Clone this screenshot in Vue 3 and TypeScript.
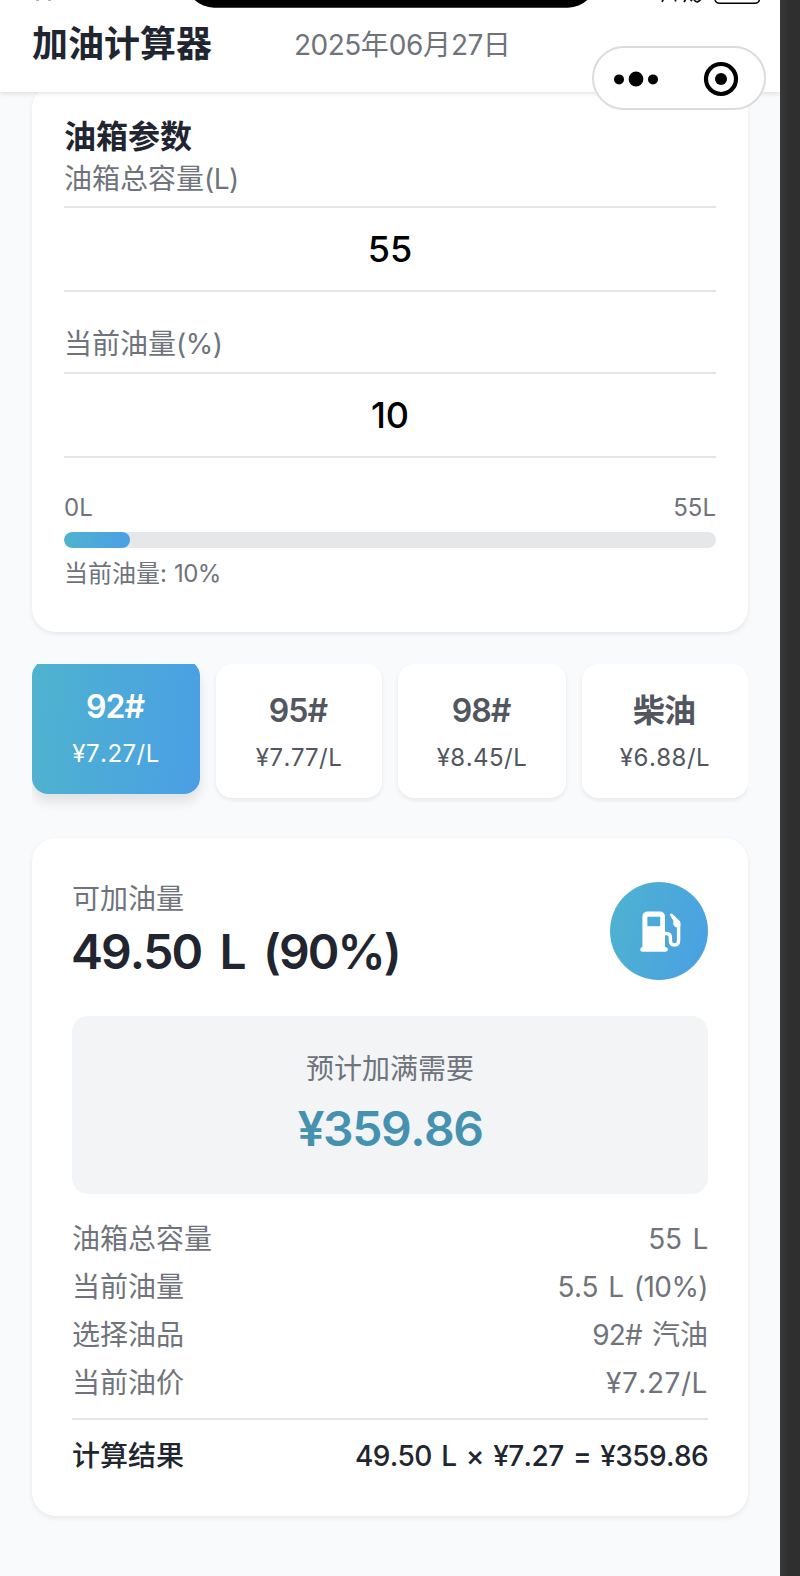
<script setup lang="ts">
interface Grade {
  name: string
  price: string
  active?: boolean
}

const grades: Grade[] = [
  { name: '92#', price: '¥7.27/L', active: true },
  { name: '95#', price: '¥7.77/L' },
  { name: '98#', price: '¥8.45/L' },
  { name: '柴油', price: '¥6.88/L' },
]

const capacity = 55
const percent = 10

interface Row {
  label: string
  value: string
  suffix?: string
  spacing?: 'tight' | 'snug' | 'wide'
}

const rows: Row[] = [
  { label: '油箱总容量', value: '55 L' },
  { label: '当前油量', value: '5.5 L (10%)', spacing: 'snug' },
  { label: '选择油品', value: '92# ', suffix: '汽油', spacing: 'tight' },
  { label: '当前油价', value: '¥7.27/L', spacing: 'wide' },
]
</script>

<template>
  <div class="window">
    <div class="screen">
      <header class="header">
        <h1 class="title">加油计算器</h1>
        <div class="date">
          <span class="num">2025</span>年<span class="num">06</span>月<span class="num">27</span>日
        </div>
      </header>

      <svg class="status" width="780" height="10" viewBox="0 0 780 10" aria-hidden="true">
        <path d="M186 -20 A28 28 0 0 0 214 7.7 H568 A28 28 0 0 0 596 -20 Z" fill="#000" />
        <rect x="715" y="-16" width="44.5" height="19.2" rx="4" fill="none" stroke="#000" stroke-width="1.5" />
        <path d="M662 1.8 L663.5 -1 M675.5 -2 V1.6 M684 2 L686.5 -2 M690 -1 L692 1 M694 0 Q697.5 4 701 -1" fill="none" stroke="#111" stroke-width="1.8" />
        <path d="M36 0.4 H39 M48 0.4 H51" stroke="#aaa" stroke-width="1" />
      </svg>

      <div class="capsule">
        <svg width="173" height="64" viewBox="0 0 173 64" aria-hidden="true">
          <circle cx="27" cy="33.4" r="5" />
          <circle cx="44" cy="33" r="7.4" />
          <circle cx="61" cy="33.4" r="5" />
          <circle cx="129" cy="33" r="15" fill="none" stroke="#000" stroke-width="4.2" />
          <circle cx="129" cy="33" r="6" />
        </svg>
      </div>

      <main class="content">
        <section class="card tank">
          <h2 class="heading">油箱参数</h2>
          <div class="label">油箱总容量<span class="num">(L)</span></div>
          <div class="field">{{ capacity }}</div>
          <div class="label second">当前油量<span class="num">(%)</span></div>
          <div class="field">{{ percent }}</div>
          <div class="scale">
            <span>0L</span>
            <span>{{ capacity }}L</span>
          </div>
          <div class="track"><div class="fill" :style="{ width: percent + '%' }"></div></div>
          <div class="level">当前油量<span class="num">: {{ percent }}%</span></div>
        </section>

        <section class="grades">
          <div v-for="g in grades" :key="g.name" class="grade" :class="{ active: g.active }">
            <div class="grade-name">{{ g.name }}</div>
            <div class="grade-price">{{ g.price }}</div>
          </div>
        </section>

        <section class="card result">
          <div class="summary">
            <div>
              <div class="small">可加油量</div>
              <div class="amount">49.50 L (90%)</div>
            </div>
            <div class="badge">
              <svg width="42" height="42" viewBox="0 0 42 42" aria-hidden="true">
                <path fill="#fff" fill-rule="evenodd" d="M8 0.5 H19.5 Q25 0.5 25 6 V36 Q27.8 36 27.8 38.5 Q27.8 40.7 25 40.7 H3 Q0.3 40.7 0.3 38.5 Q0.3 36 2.4 36 V6 Q2.4 0.5 8 0.5 Z M7.4 5.8 V15.3 H20.2 V5.8 Z" />
                <path d="M24.5 22.5 H26.4 Q30.4 22.5 30.4 27 V29.5 Q30.4 34 34.4 34 Q38.6 34 38.6 29.5 V12" fill="none" stroke="#fff" stroke-width="3.4" />
                <path d="M31.3 3.8 L39 11.3 V15 H36.2 L34.6 13.4 V9.2 Z" fill="#fff" stroke="#fff" stroke-width="2.6" stroke-linejoin="round" />
              </svg>
            </div>
          </div>

          <div class="cost">
            <div class="small">预计加满需要</div>
            <div class="price">¥359.86</div>
          </div>

          <div v-for="r in rows" :key="r.label" class="row">
            <span>{{ r.label }}</span>
            <span><span class="value" :class="r.spacing">{{ r.value }}</span>{{ r.suffix }}</span>
          </div>
          <div class="total">
            <span>计算结果</span>
            <span class="total-num">49.50 L × ¥7.27 = ¥359.86</span>
          </div>
        </section>
      </main>
    </div>
  </div>
</template>

<style>
html,
body {
  margin: 0;
  background: #2f2f2f;
}
</style>

<style scoped>
.window {
  width: 800px;
  height: 1576px;
  overflow: hidden;
  background: linear-gradient(90deg, #383838 780px, #2f2f2f 789px);
  font-family: Inter, 'Noto Sans CJK SC', sans-serif;
  font-kerning: none;
  color: #6f737b;
}
.screen {
  position: relative;
  width: 780px;
  height: 1576px;
  overflow: hidden;
  background: #f9fafc;
}
.header {
  position: relative;
  z-index: 2;
  display: flex;
  box-sizing: border-box;
  height: 92px;
  padding: 20px 32px 24px;
  background: #fff;
  box-shadow: 0 2px 4px rgba(0, 0, 0, 0.1);
  line-height: 48px;
}
.title {
  width: 262px;
  margin: 0;
  color: #20252f;
  font-size: 36px;
  font-weight: 600;
}
.date {
  padding-top: 1px;
  font-size: 28px;
}
.num {
  letter-spacing: -0.018em;
  white-space: pre;
}
.status {
  position: absolute;
  z-index: 3;
  top: 0;
  left: 0;
}
.capsule {
  position: absolute;
  z-index: 4;
  top: 46px;
  left: 592px;
  box-sizing: border-box;
  width: 174px;
  height: 64px;
  border: 2px solid #dcdcdc;
  border-radius: 32px;
  background: #fff;
}
.capsule svg {
  display: block;
  margin: -2px;
}
.content {
  padding: 0 32px;
}
.card {
  box-sizing: border-box;
  border-radius: 24px;
  background: #fff;
  box-shadow: 0 2px 5px rgba(0, 0, 0, 0.08);
}
.tank {
  height: 548px;
  margin-top: -8px;
  padding: 32px;
}
.heading {
  margin: 0;
  color: #20252f;
  font-size: 32px;
  font-weight: 600;
  line-height: 42px;
}
.label {
  box-sizing: border-box;
  height: 48px;
  padding-top: 1px;
  font-size: 28px;
  line-height: 40px;
}
.second {
  height: 80px;
  padding-top: 32px;
}
.field {
  box-sizing: border-box;
  height: 86px;
  border-top: 2px solid #e5e5e5;
  border-bottom: 2px solid #e5e5e5;
  color: #000;
  font-size: 36px;
  font-weight: 500;
  line-height: 83px;
  text-align: center;
}
.scale {
  display: flex;
  justify-content: space-between;
  height: 42px;
  padding-top: 32px;
  font-size: 24px;
  line-height: 36px;
}
.track {
  height: 16px;
  overflow: hidden;
  border-radius: 8px;
  background: #e5e7e9;
}
.fill {
  height: 100%;
  padding-right: 1px;
  border-radius: 8px;
  background: linear-gradient(90deg, #4fb3cf, #4a9fe6);
}
.level {
  padding-top: 8px;
  font-size: 24px;
  line-height: 36px;
}
.level .num {
  letter-spacing: -0.025em;
  word-spacing: 1.5px;
}
.grades {
  display: grid;
  grid-template-columns: 168fr 166fr 168fr 166fr;
  gap: 16px;
  height: 150px;
  margin-top: 32px;
  overflow: hidden;
}
.grade {
  box-sizing: border-box;
  height: 134px;
  padding-top: 25px;
  border-radius: 16px;
  background: #fff;
  box-shadow: 0 2px 4px rgba(0, 0, 0, 0.08);
  color: #52565f;
  text-align: center;
}
.active {
  background: linear-gradient(95deg, #4fb3cf, #4a9fe4);
  box-shadow: 0 8px 12px rgba(0, 0, 0, 0.1);
  color: #fff;
  transform: translateY(-4px);
}
.grade-name {
  margin-left: -2px;
  font-size: 32px;
  font-weight: 600;
  letter-spacing: -0.03em;
  line-height: 44px;
}
.grade-price {
  padding-top: 7px;
  font-size: 24px;
  letter-spacing: 0.02em;
  line-height: 36px;
}
.result {
  height: 678px;
  margin-top: 24px;
  padding: 40px;
}
.summary {
  display: flex;
  justify-content: space-between;
  height: 138px;
}
.small {
  padding-top: 1px;
  font-size: 28px;
  line-height: 40px;
}
.amount {
  margin-left: -1px;
  color: #20252f;
  font-size: 48px;
  font-weight: 600;
  letter-spacing: -1.9px;
  line-height: 66px;
  word-spacing: 8px;
}
.badge {
  display: flex;
  box-sizing: border-box;
  align-items: center;
  justify-content: center;
  width: 98px;
  height: 98px;
  margin-top: 4px;
  padding: 2px 0 0 3px;
  border-radius: 50%;
  background: linear-gradient(105deg, #4fb3cf, #4a9fe4);
}
.cost {
  box-sizing: border-box;
  height: 178px;
  margin-bottom: 21px;
  padding-top: 32px;
  border-radius: 16px;
  background: #f2f4f6;
  text-align: center;
}
.price {
  color: #4492b0;
  font-size: 48px;
  font-weight: 600;
  letter-spacing: -0.03em;
  line-height: 80px;
}
.row {
  display: flex;
  justify-content: space-between;
  font-size: 28px;
  line-height: 48px;
}
.value {
  letter-spacing: -0.01em;
  white-space: pre;
  word-spacing: 3px;
}
.tight {
  letter-spacing: -0.03em;
}
.snug {
  letter-spacing: -0.02em;
}
.wide {
  letter-spacing: 0.02em;
}
.total {
  display: flex;
  justify-content: space-between;
  margin-top: 11px;
  border-top: 2px solid #e5e5e5;
  color: #20252f;
  font-size: 28px;
  font-weight: 500;
  line-height: 73px;
}
.total-num {
  letter-spacing: -0.6px;
  word-spacing: 2.5px;
}
</style>
